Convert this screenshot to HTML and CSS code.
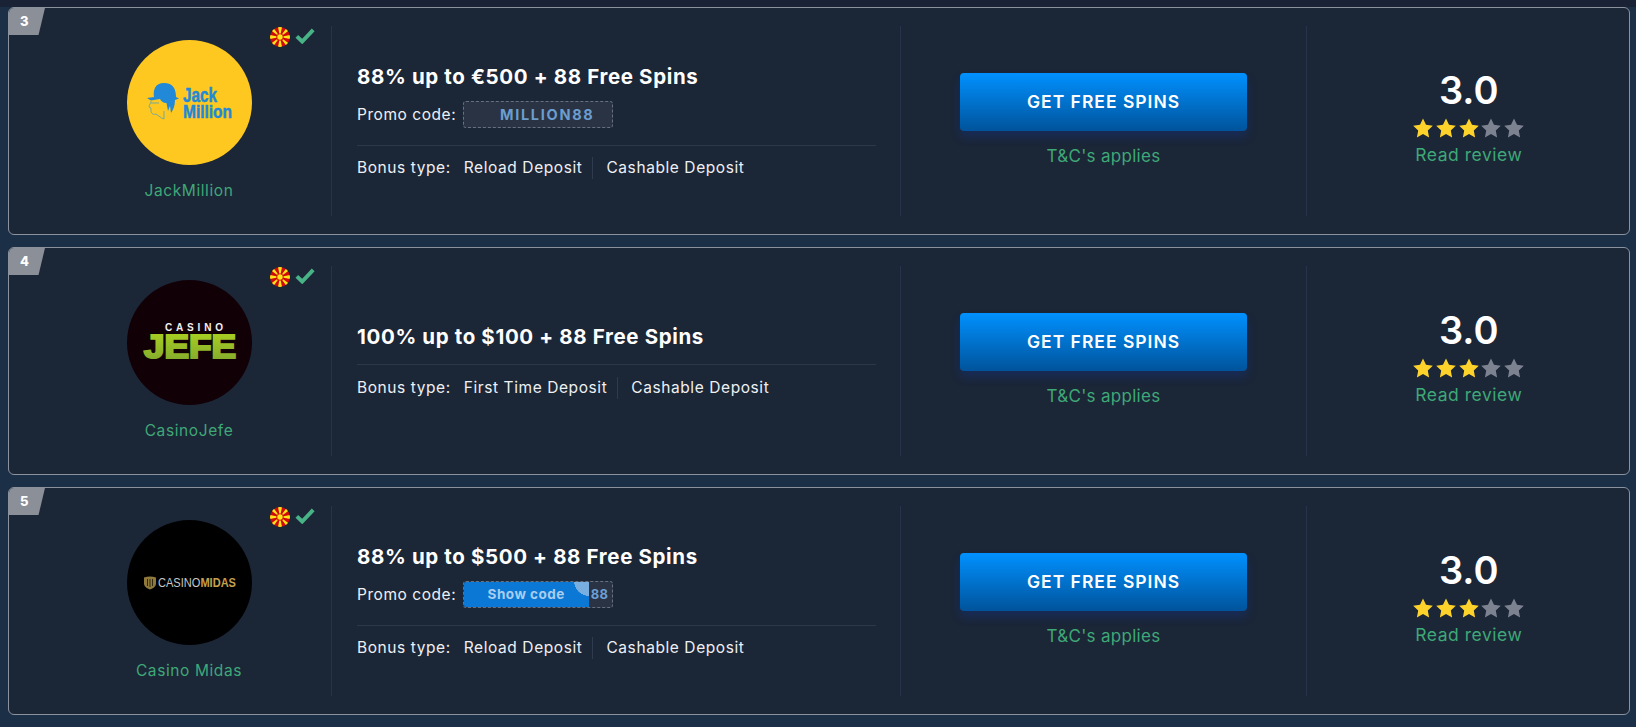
FILE: index.html
```html
<!DOCTYPE html>
<html lang="en">
<head>
<meta charset="utf-8">
<title>Casino bonuses</title>
<link rel="stylesheet" href="styles.css">
</head>
<body>
<svg class="defs" width="0" height="0" aria-hidden="true">
  <defs>
    <symbol id="flag" viewBox="0 0 20 20">
      <clipPath id="flagclip"><circle cx="10" cy="10" r="10"/></clipPath>
      <g clip-path="url(#flagclip)">
        <rect width="20" height="20" fill="#cf0a0a"/>
        <path fill="#ffe41a" d="M8 0h4L10 10zM8 20h4L10 10zM0 8v4L10 10zM20 8v4L10 10zM10 10L18.900 3.500 16.500 1.100zM10 10L18.900 16.500 16.500 18.900zM10 10L1.100 16.500 3.500 18.900zM10 10L1.100 3.500 3.500 1.100z"/>
        <circle cx="10" cy="10" r="3.600" fill="#cf0a0a"/>
        <circle cx="10" cy="10" r="2.700" fill="#ffe41a"/>
      </g>
    </symbol>
    <symbol id="check" viewBox="0 0 20 16">
      <path d="M1.800 8.300l5.400 5.200L18.200 1.800" fill="none" stroke="#47b386" stroke-width="3.900"/>
    </symbol>
    <symbol id="star" viewBox="0 0 20 20">
      <path d="M10 .4l3 6.400 6.800.9-5 4.800 1.300 7L10 16.100l-6.100 3.400 1.300-7-5-4.800 6.800-.9z"/>
    </symbol>
    <linearGradient id="jefegrad" x1="0" y1="0" x2="0" y2="1">
      <stop offset="0" stop-color="#bce21c"/>
      <stop offset="1" stop-color="#7fa62e"/>
    </linearGradient>
  </defs>
</svg>

<div class="topband"></div>
<main class="list">

  <article class="card">
    <span class="rank">3</span>
    <div class="marks">
      <svg class="flag"><use href="#flag"/></svg>
      <svg class="check"><use href="#check"/></svg>
    </div>
    <div class="col col-brand">
      <svg class="logo" viewBox="0 0 125 125">
        <circle cx="62.500" cy="62.500" r="62.500" fill="#fec820"/>
        <path fill="#2189d8" d="M20 58l7-1c-1-7 1-14 10-14s12 6 12 14l3 1.500-4 1.500c0 6-2 10-4 13l-1-7-2 5-1.500-8c-3.500 0-5.500-2-6.500-4l-9 1.500z"/>
        <path fill="none" stroke="#6aa6a8" stroke-width=".9" d="M24 61c0 2-2 4-2 6l2 1v4c1 2 3 3 5 2 3 2 5 4 8 5v-8M24 63h8"/>
        <text class="logo-jack"><tspan class="logo-jack-a" x="56" y="62" textLength="34" lengthAdjust="spacingAndGlyphs">Jack</tspan> <tspan class="logo-jack-b" x="56" y="78" textLength="49" lengthAdjust="spacingAndGlyphs">Million</tspan></text>
      </svg>
      <a class="name">JackMillion</a>
    </div>
    <div class="col col-offer">
      <h2 class="title">88% up to €500 + 88 Free Spins</h2>
      <div class="promo"><span>Promo code:</span><span class="code code-shown">MILLION88</span></div>
      <div class="types"><span class="types-label">Bonus type:</span><span class="type">Reload Deposit</span><span class="type">Cashable Deposit</span></div>
    </div>
    <div class="col col-cta">
      <a class="btn">GET FREE SPINS</a>
      <a class="tc">T&amp;C's applies</a>
    </div>
    <div class="col col-rate">
      <div class="score">3.0</div>
      <div class="stars">
        <svg class="star on"><use href="#star"/></svg><svg class="star on"><use href="#star"/></svg><svg class="star on"><use href="#star"/></svg><svg class="star"><use href="#star"/></svg><svg class="star"><use href="#star"/></svg>
      </div>
      <a class="review">Read review</a>
    </div>
  </article>

  <article class="card">
    <span class="rank">4</span>
    <div class="marks">
      <svg class="flag"><use href="#flag"/></svg>
      <svg class="check"><use href="#check"/></svg>
    </div>
    <div class="col col-brand">
      <svg class="logo" viewBox="0 0 125 125">
        <circle cx="62.500" cy="62.500" r="62.500" fill="#120007"/>
        <text><tspan class="logo-casino" x="38" y="51" textLength="58">CASINO</tspan> <tspan class="logo-jefe" x="17" y="78" textLength="92" lengthAdjust="spacingAndGlyphs" fill="url(#jefegrad)" stroke="url(#jefegrad)">JEFE</tspan></text>
      </svg>
      <a class="name">CasinoJefe</a>
    </div>
    <div class="col col-offer">
      <h2 class="title">100% up to $100 + 88 Free Spins</h2>
      <div class="types"><span class="types-label">Bonus type:</span><span class="type">First Time Deposit</span><span class="type">Cashable Deposit</span></div>
    </div>
    <div class="col col-cta">
      <a class="btn">GET FREE SPINS</a>
      <a class="tc">T&amp;C's applies</a>
    </div>
    <div class="col col-rate">
      <div class="score">3.0</div>
      <div class="stars">
        <svg class="star on"><use href="#star"/></svg><svg class="star on"><use href="#star"/></svg><svg class="star on"><use href="#star"/></svg><svg class="star"><use href="#star"/></svg><svg class="star"><use href="#star"/></svg>
      </div>
      <a class="review">Read review</a>
    </div>
  </article>

  <article class="card">
    <span class="rank">5</span>
    <div class="marks">
      <svg class="flag"><use href="#flag"/></svg>
      <svg class="check"><use href="#check"/></svg>
    </div>
    <div class="col col-brand">
      <svg class="logo" viewBox="0 0 125 125">
        <circle cx="62.500" cy="62.500" r="62.500" fill="#000"/>
        <path fill="#8f7a3c" d="M17 57.500c4-1.500 8-1.500 12 0v6c0 3-3 5-6 6-3-1-6-3-6-6z"/>
        <path fill="none" stroke="#1a1505" stroke-width=".8" d="M20.500 59v7M23 59v8M25.500 59v7"/>
        <text x="31" y="67" textLength="78" lengthAdjust="spacingAndGlyphs"><tspan class="logo-midas-a">CASINO</tspan><tspan class="logo-midas-b">MIDAS</tspan></text>
      </svg>
      <a class="name">Casino Midas</a>
    </div>
    <div class="col col-offer">
      <h2 class="title">88% up to $500 + 88 Free Spins</h2>
      <div class="promo"><span>Promo code:</span>
        <span class="code code-hidden"><span class="code-peek">88</span><span class="reveal">Show code</span></span>
      </div>
      <div class="types"><span class="types-label">Bonus type:</span><span class="type">Reload Deposit</span><span class="type">Cashable Deposit</span></div>
    </div>
    <div class="col col-cta">
      <a class="btn">GET FREE SPINS</a>
      <a class="tc">T&amp;C's applies</a>
    </div>
    <div class="col col-rate">
      <div class="score">3.0</div>
      <div class="stars">
        <svg class="star on"><use href="#star"/></svg><svg class="star on"><use href="#star"/></svg><svg class="star on"><use href="#star"/></svg><svg class="star"><use href="#star"/></svg><svg class="star"><use href="#star"/></svg>
      </div>
      <a class="review">Read review</a>
    </div>
  </article>

</main>
</body>
</html>
```
FILE: styles.css
```css
* { box-sizing: border-box; }
html, body { margin: 0; padding: 0; }
body {
  background: #1b2f47;
  color: #eef0f3;
  font-family: Inter, "Open Sans", "Liberation Sans", sans-serif;
  overflow: hidden;
}
.defs { position: absolute; }
.topband { height: 7px; background: #1a2236; }
.list { display: flex; flex-direction: column; gap: 12px; padding: 0 6px 0 8px; }

.card {
  position: relative;
  display: flex;
  height: 228px;
  padding: 18px 0;
  background: #1b2637;
  border: 1px solid #8b929e;
  border-radius: 6px;
}
.rank {
  position: absolute;
  left: 0;
  top: 0;
  width: 36px;
  height: 27px;
  padding: 4px 0 0 11px;
  background: #8a8f98;
  clip-path: polygon(0 0, 100% 0, 82% 100%, 0 100%);
  border-top-left-radius: 5px;
  font-size: 13px;
  font-weight: 800;
  line-height: 18px;
  color: #fff;
}
.marks {
  position: absolute;
  left: 261px;
  top: 19px;
  display: flex;
  align-items: center;
  gap: 5px;
}
.flag { width: 20px; height: 20px; }
.check { width: 20px; height: 16px; margin-top: -3px; }

.col { display: flex; flex-direction: column; border-right: 1px solid #26334a; }
.col-brand { width: 323px; padding-left: 38px; align-items: center; }
.logo { width: 125px; height: 125px; margin-top: 14px; flex: none; }
.logo text { font-family: "Liberation Sans", sans-serif; }
.logo-jack { font-weight: 700; fill: #2189d8; stroke: #2189d8; stroke-width: .5; }
.logo-jack-a { font-size: 21px; }
.logo-jack-b { font-size: 19px; }
.logo-casino { font-size: 10px; font-weight: 700; fill: #f1f1f1; }
.logo-jefe { font-size: 33px; font-weight: 700; stroke-width: 2.200; }
.logo-midas-a { font-size: 12.500px; fill: #c7c7c7; }
.logo-midas-b { font-size: 12.500px; font-weight: 700; fill: #c4a24e; }
.name {
  margin-top: 16px;
  font-size: 15.500px;
  line-height: 20px;
  color: #3fa877;
  letter-spacing: .6px;
}

.col-offer { width: 569px; padding: 0 24px 0 25px; justify-content: center; }
.title {
  margin: 0;
  font-size: 20.500px;
  line-height: 26px;
  font-weight: 700;
  color: #fff;
  letter-spacing: .63px;
}
.promo {
  display: flex;
  align-items: center;
  gap: 7px;
  height: 27px;
  margin-top: 11px;
  font-size: 15.500px;
  letter-spacing: .55px;
  color: #eef0f3;
}
.code {
  position: relative;
  display: block;
  width: 150px;
  height: 27px;
  text-align: center;
  font-size: 13px;
  font-weight: 700;
  line-height: 25px;
  letter-spacing: .3px;
  color: #6a9fd6;
  background: #2a3344;
  border: 1px dashed #667080;
  border-radius: 3px;
}
.code-shown { padding-left: 18px; font-size: 14.500px; letter-spacing: 1.700px; color: #6b9ecf; }
.code-hidden { text-align: right; overflow: hidden; }
.code-peek { padding-right: 4px; }
.reveal {
  position: absolute;
  left: -1px;
  top: -1px;
  width: 126px;
  height: 27px;
  text-align: center;
  font-size: 13.500px;
  letter-spacing: .5px;
  line-height: 27px;
  color: #a9cdef;
  background: radial-gradient(circle 15px at 100% 0, #78aee0 98%, transparent 100%), #0a78d4;
}
.types {
  display: flex;
  align-items: center;
  margin-top: 14px;
  padding-top: 12px;
  border-top: 1px solid #2c3749;
  font-size: 15.500px;
  line-height: 22px;
  letter-spacing: .58px;
  color: #eef0f3;
}
.promo + .types { margin-top: 17px; margin-bottom: -1px; padding-top: 11px; }
.types-label { margin-right: 13px; }
.type + .type { margin-left: 10px; padding-left: 13px; border-left: 1px solid #2e3a4d; }

.col-cta { width: 406px; align-items: center; justify-content: center; padding-bottom: 1px; }
.btn {
  display: block;
  width: 287px;
  height: 58px;
  background: linear-gradient(#0091ff, #00539b);
  border-radius: 4px;
  box-shadow: 0 6px 10px rgba(20, 50, 130, .45);
  text-align: center;
  font-size: 17.500px;
  font-weight: 600;
  line-height: 58px;
  color: #fff;
  letter-spacing: 1px;
}
.tc {
  margin-top: 13px;
  font-size: 17px;
  line-height: 24px;
  color: #3fa877;
  letter-spacing: .3px;
}

.col-rate { flex: 1; align-items: center; border-right: 0; padding: 42px 0 0 1.500px; }
.score { font-size: 38px; font-weight: 600; line-height: 44px; color: #fff; }
.stars { display: flex; gap: 2.700px; margin-top: 6px; height: 20px; }
.star { width: 20px; height: 20px; fill: #7c8290; }
.star.on { fill: #fdd32b; }
.review {
  margin-top: 6px;
  font-size: 17.500px;
  line-height: 22px;
  color: #3fa877;
  letter-spacing: .52px;
}
```
